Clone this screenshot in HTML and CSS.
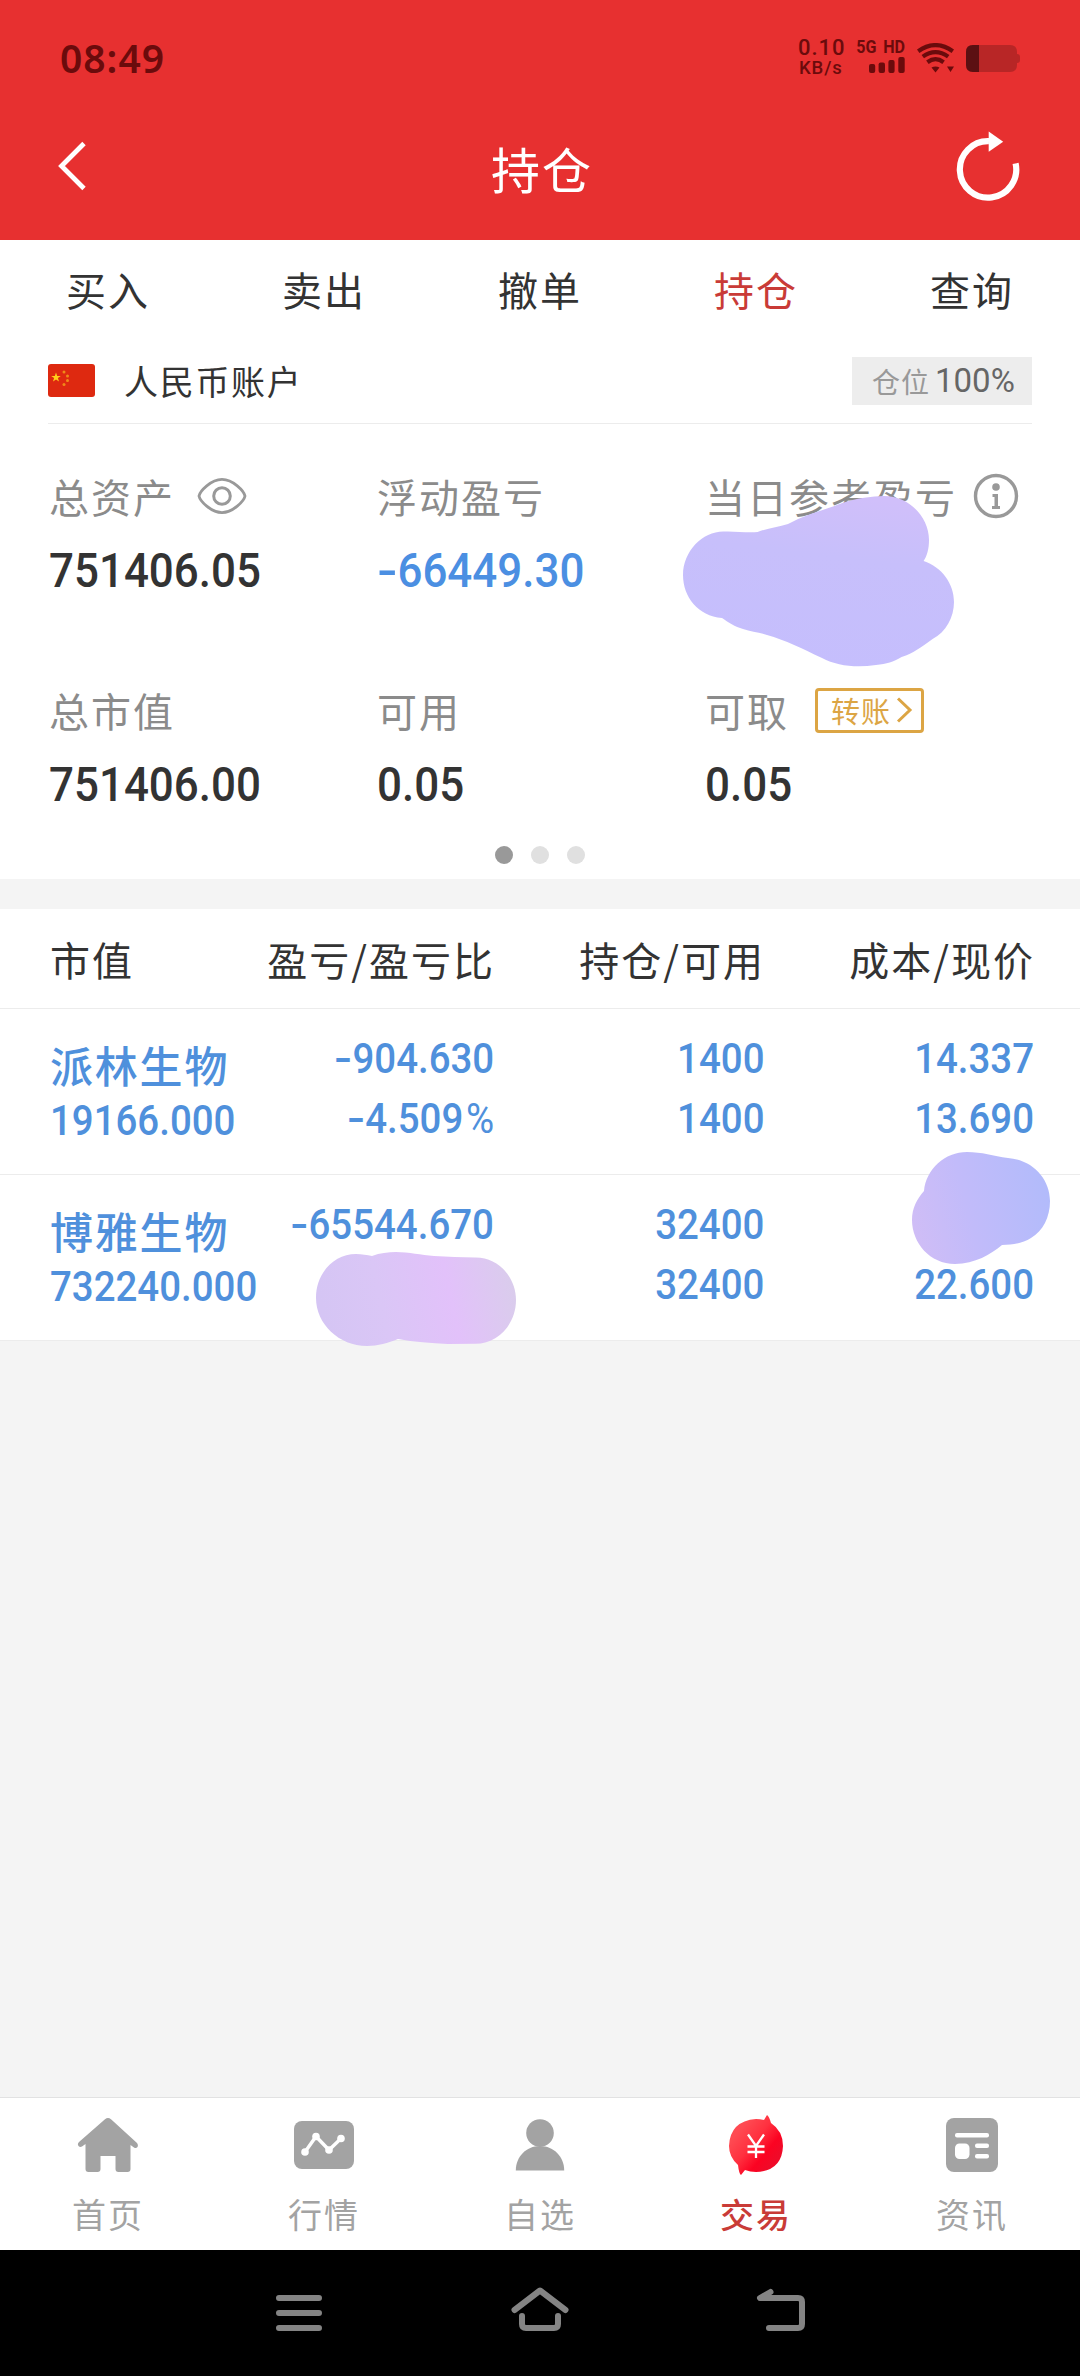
FILE: index.html
```html
<!DOCTYPE html>
<html lang="zh-CN">
<head>
<meta charset="utf-8">
<title>持仓</title>
<link rel="stylesheet" href="styles.css">
</head>
<body>
<div class="screen">
  <header class="top">
    <div class="status">
      <span class="clock">08:49</span>
      <div class="status-right">
        <div class="speed"><span class="speed-num">0.10</span><span class="speed-unit">KB/s</span></div>
        <div class="signal">
          <span class="net">5G HD</span>
          <svg width="36" height="16" viewBox="0 0 36 16" fill="#6b0b0c"><rect x="0" y="7" width="6.2" height="9" rx="2"/><rect x="9.6" y="5.5" width="6.4" height="10.5" rx="2"/><rect x="19.4" y="3" width="6.2" height="13" rx="2"/><rect x="29.3" y="0" width="6.4" height="16" rx="2"/></svg>
        </div>
        <svg class="wifi" width="38" height="30" viewBox="0 0 38 30" fill="none" stroke="#6b0b0c" stroke-width="4.2"><path d="M1.2 8.2Q18.5-4 35.8 8.2"/><path d="M5.8 13.6Q18.5 4.6 31.2 13.6"/><path d="M10.4 19.2Q18.5 13.2 26.6 19.2"/><path d="M14.5 24.6Q18.5 22.4 22.5 24.6L18.5 29.5ZM30 23.5h7L33.5 29Z" fill="#6b0b0c" stroke="none"/></svg>
        <svg class="battery" width="54" height="27" viewBox="0 0 54 27"><path d="M7 0H44Q51 0 51 7V9Q54 9 54 12V15Q54 18 51 18V20Q51 27 44 27H7Q0 27 0 20V7Q0 0 7 0Z" fill="#b82626"/><path d="M13 0H7Q0 0 0 7V20Q0 27 7 27H13Z" fill="#5c1012"/></svg>
      </div>
    </div>
    <div class="titlebar">
      <svg width="30" height="54" viewBox="57 139 30 54"><path d="M84 143.5L61.5 166L84 188.5" fill="none" stroke="#fff" stroke-width="4.8"/></svg>
      <h1>持仓</h1>
      <svg width="66" height="74" viewBox="955 129 66 74"><path d="M989 141.2A28.2 28.2 0 1 0 1015.6 163.4" fill="none" stroke="#fff" stroke-width="6.2"/><path d="M988.7 131.5L1003.2 141.7L988.7 151.8Z" fill="#fff"/></svg>
    </div>
  </header>

  <nav class="tabs"><a>买入</a><a>卖出</a><a>撤单</a><a class="active">持仓</a><a>查询</a></nav>

  <section class="summary">
    <div class="account">
      <svg width="47" height="33" viewBox="0 0 47 33"><rect width="47" height="33" rx="3" fill="#de2910"/><path d="M8 8.5L9.2 12H12.8L9.9 14.1L11 17.6L8 15.5L5 17.6L6.1 14.1L3.2 12H6.8Z" fill="#ffcf1a"/><g fill="#f08a18"><circle cx="16" cy="8" r="1.5"/><circle cx="19.5" cy="12" r="1.5"/><circle cx="19.5" cy="16.5" r="1.5"/><circle cx="16" cy="20.5" r="1.5"/></g></svg>
      <span class="account-name">人民币账户</span>
      <span class="ratio"><span>仓位</span><b>100%</b></span>
    </div>
    <div class="metrics">
      <div class="metric">
        <div class="label">总资产<svg class="eye" width="50" height="38" viewBox="0 0 50 38" fill="none" stroke="#999" stroke-width="2.8"><path d="M2 19C3 14 14 2.400 25 2.400S47 14 48 19C47 24 36 35.600 25 35.600S3 24 2 19Z"/><circle cx="25" cy="19" r="8.300" stroke-width="3"/></svg></div>
        <div class="value"><span class="num">751406.05</span></div>
      </div>
      <div class="metric">
        <div class="label">浮动盈亏</div>
        <div class="value down"><span class="num"><i>-</i>66449.30</span></div>
      </div>
      <div class="metric">
        <div class="label">当日参考盈亏<svg class="info" width="46" height="46" viewBox="0 0 46 46"><circle cx="23" cy="23" r="20.500" fill="none" stroke="#999" stroke-width="3.400"/><circle cx="23" cy="14" r="3.800" fill="#999"/><path d="M19.500 21H25V33H27V36H19V33H21.500V24H19.500Z" fill="#999"/></svg></div>
        <div class="value"></div>
      </div>
      <div class="metric">
        <div class="label">总市值</div>
        <div class="value"><span class="num">751406.00</span></div>
      </div>
      <div class="metric">
        <div class="label">可用</div>
        <div class="value"><span class="num">0.05</span></div>
      </div>
      <div class="metric">
        <div class="label">可取<a class="transfer">转账<svg width="17" height="26" viewBox="0 0 17 26"><path d="M2 1.500L14 13L2 24.500" fill="none" stroke="#dca544" stroke-width="3"/></svg></a></div>
        <div class="value"><span class="num">0.05</span></div>
      </div>
    </div>
    <div class="dots"><span class="on"></span><span></span><span></span></div>
    <svg class="blob blob-a" width="272" height="172" viewBox="683 496 272 172">
      <defs><linearGradient id="ga" x1=".6" y1="0" x2=".4" y2="1"><stop offset="0" stop-color="#d0bffa"/><stop offset=".35" stop-color="#c7bffb"/><stop offset="1" stop-color="#c5befd"/></linearGradient></defs>
      <path fill="url(#ga)" d="M683 575C683 551 703 531 724 531.500C735 531 747 533 757.600 532C768 528 778 527 788 524C803 516 817 512 833 506.500C845 502 857 497 884 496C909 496 929 517 929 540C929 549 927 556 923.600 561C942 567 954 584 954 602C954 617 946 632 932.600 639C921 647 914 653 901.600 657C893 662 887 664 876 665C856 668 837 666 822 658C803 649 785 640 767 635C759 632 751 632 743 629C735 627 728 622 722 618C698 616 683 597 683 575Z"/>
    </svg>
  </section>

  <section class="holdings">
    <div class="row head"><span>市值</span><span>盈亏/盈亏比</span><span>持仓/可用</span><span>成本/现价</span></div>
    <div class="row stock">
      <div class="cell name"><strong>派林生物</strong><span class="num">19166.000</span></div>
      <div class="cell"><span class="num"><i>-</i>904.630</span><span class="num"><i>-</i>4.509<em>%</em></span></div>
      <div class="cell"><span class="num">1400</span><span class="num">1400</span></div>
      <div class="cell"><span class="num">14.337</span><span class="num">13.690</span></div>
    </div>
    <div class="row stock">
      <div class="cell name"><strong>博雅生物</strong><span class="num">732240.000</span></div>
      <div class="cell"><span class="num"><i>-</i>65544.670</span></div>
      <div class="cell"><span class="num">32400</span><span class="num">32400</span></div>
      <div class="cell end"><span class="num">22.600</span></div>
    </div>
    <svg class="blob blob-b" width="202" height="96" viewBox="315 1251 202 96">
      <defs><linearGradient id="gb" x1="0" y1=".3" x2="1" y2=".2"><stop offset="0" stop-color="#d5c5f4"/><stop offset=".3" stop-color="#dac6f6"/><stop offset=".65" stop-color="#e2c1fa"/><stop offset="1" stop-color="#d9cdeb"/></linearGradient></defs>
      <path fill="url(#gb)" d="M316 1298C316 1273 334 1254 356 1254C362 1254 367 1255 372 1256C380 1253 388 1252 396 1252C409 1252 421 1255 434 1256C448 1257 461 1257 475 1257.500C498 1257 516 1277 516 1300C516 1324 498 1344 475 1343.700L448 1344C431 1343 414 1342 398 1339C388 1343 378 1346 367 1346C339 1346 316 1324 316 1298Z"/>
    </svg>
    <svg class="blob blob-c" width="140" height="114" viewBox="911 1151 140 114">
      <defs><linearGradient id="gc" x1="0" y1=".6" x2="1" y2=".4"><stop offset="0" stop-color="#cfbdf6"/><stop offset=".4" stop-color="#c2bbfa"/><stop offset="1" stop-color="#b2bbfb"/></linearGradient></defs>
      <path fill="url(#gc)" d="M912 1220C912 1208 917 1199 924 1191C926 1169 945 1152 967 1152C982 1152 993 1156 1008 1158C1033 1160 1050 1179 1050 1201C1050 1217 1043 1231 1031 1238C1023 1243 1013 1245 1002 1245C991 1254 975 1264 955 1264C930 1264 912 1243 912 1220Z"/>
    </svg>
  </section>

  <footer class="tabbar">
    <a><svg width="62" height="56" viewBox="77 2117 62 56" fill="#a3a3a3"><path d="M105 2119.200Q108 2116.800 111 2119.200L137 2143Q138.500 2145 137.500 2147Q136 2148.800 134 2147.500L130.500 2145V2169Q130.500 2172 127.500 2172H118.500Q115.500 2172 115.500 2169V2156H100.500V2169Q100.500 2172 97.500 2172H88.500Q85.500 2172 85.500 2169V2144L82 2146.500Q80 2147.500 78.500 2146Q77 2144 79 2142Z"/></svg>首页</a>
    <a><svg width="62" height="56" viewBox="293 2117 62 56"><rect x="294" y="2121" width="60" height="48" rx="8" fill="#a3a3a3"/><path d="M305 2152L316 2136.500L329 2150L341 2138.500" fill="none" stroke="#fff" stroke-width="3.400"/><g fill="#fff"><circle cx="305" cy="2152" r="3.800"/><circle cx="316" cy="2136.500" r="3.800"/><circle cx="329" cy="2150" r="3.800"/><circle cx="341" cy="2138.500" r="3.800"/></g></svg>行情</a>
    <a><svg width="62" height="56" viewBox="509 2117 62 56" fill="#a3a3a3"><circle cx="540" cy="2133" r="13.800"/><path d="M515.800 2170.500C515.800 2157 526 2146 540 2146S564.200 2157 564.200 2170.500Z"/></svg>自选</a>
    <a class="active"><svg width="62" height="62" viewBox="725 2114 62 62"><defs><linearGradient id="gt" x1=".2" y1=".25" x2=".8" y2=".8"><stop offset="0" stop-color="#ff4a52"/><stop offset=".4" stop-color="#ff303f"/><stop offset=".75" stop-color="#fb0322"/><stop offset="1" stop-color="#f00a28"/></linearGradient></defs><path fill="url(#gt)" d="M764 2120L767 2115Q769 2116 771 2123Q783 2131 783 2146Q782 2171 756 2172Q750 2172 745 2170L741 2175Q739 2174 738 2165Q729 2157 729 2146Q730 2121 756 2119Q760 2119 764 2120Z"/><path d="M748 2134.500L756 2146L764 2134.500M756 2146V2158M747.500 2146.500H764.500M747.500 2152H764.500" fill="none" stroke="#fff" stroke-width="2.300"/></svg>交易</a>
    <a><svg width="62" height="56" viewBox="941 2117 62 56"><rect x="946" y="2118" width="52" height="54" rx="8" fill="#a3a3a3"/><g fill="#fff"><rect x="955" y="2133" width="34" height="4.500" rx="2"/><rect x="955" y="2143.500" width="14.500" height="15.500" rx="4.500"/><rect x="975" y="2143.500" width="14" height="4.500" rx="2"/><rect x="975" y="2154" width="14" height="4.500" rx="2"/></g></svg>资讯</a>
  </footer>

  <div class="sysnav">
    <svg width="60" height="50" viewBox="270 2285 60 50" stroke="#848484" stroke-width="6" stroke-linecap="round"><path d="M280 2298H320M280 2313H320M280 2328H320"/></svg>
    <svg width="64" height="50" viewBox="508 2285 64 50" fill="none" stroke="#848484" stroke-width="6" stroke-linecap="round" stroke-linejoin="round"><path d="M514.500 2310L540 2290.500L565.500 2310M522 2316V2324Q522 2328 526 2328H554Q558 2328 558 2324V2316"/></svg>
    <svg width="60" height="50" viewBox="750 2285 60 50" fill="none" stroke="#848484" stroke-width="6" stroke-linecap="round" stroke-linejoin="round"><path d="M769.500 2292L759 2298H797Q801 2298 801 2302V2324Q801 2328 797 2328H768"/></svg>
  </div>
</div>
</body>
</html>
```
FILE: styles.css
```css
* { box-sizing: border-box; }
body { margin: 0; font-family: "Noto Sans CJK SC", sans-serif; color: #333; }
svg { display: block; flex: none; }
.screen { width: 1080px; height: 2376px; display: flex; flex-direction: column; background: #f4f4f4; overflow: hidden; }

.top { height: 240px; background: #e73030; flex: none; }
.status { height: 116px; padding: 0 60px; display: flex; align-items: center; justify-content: space-between; color: #6b0b0c; font-family: "Noto Sans", sans-serif; }
.clock { font-size: 39px; font-weight: 600; letter-spacing: 1px; line-height: 116px; }
.status-right { display: flex; align-items: flex-start; height: 36px; }
.speed { width: 46px; margin: -1px 13px 0 0; display: flex; flex-direction: column; font: 500 22px/18px Roboto, sans-serif; white-space: nowrap; }
.speed-num { line-height: 18px; letter-spacing: 1px; }
.speed-unit { font-size: 18.500px; line-height: 18px; padding: 2px 0 0 1px; letter-spacing: .9px; }
.signal { width: 48px; display: flex; flex-direction: column; align-items: flex-end; gap: 3px; margin-right: 12px; }
.net { font: 700 17.500px/14px Roboto, sans-serif; white-space: nowrap; word-spacing: 3px; transform: scaleX(.92); transform-origin: right center; }
.wifi { margin: 3px 11px 0 0; }
.battery { margin-top: 5px; }
.titlebar { height: 100px; padding: 0 59px 0 57px; display: flex; align-items: center; justify-content: space-between; }
.titlebar h1 { margin: 0 0 0 42px; color: #fff; font-size: 49px; font-weight: 400; letter-spacing: 2px; line-height: 100px; padding-top: 3px; }

.tabs { height: 102px; flex: none; display: flex; background: #fff; }
.tabs a { flex: 1; text-align: center; font-size: 40px; letter-spacing: 2px; line-height: 99px; }
.tabs .active { color: #c93b37; }

.summary { position: relative; height: 537px; flex: none; padding: 0 48px; background: #fff; }
.account { height: 82px; display: flex; align-items: center; border-bottom: 1px solid #ececec; padding-bottom: 4px; }
.account-name { margin-left: 29px; flex: 1; font-size: 34px; letter-spacing: 1.700px; }
.ratio { width: 180px; height: 48px; padding-left: 20px; display: flex; align-items: center; background: #ededed; color: #999; font-size: 28px; letter-spacing: 1px; white-space: nowrap; }
.ratio b { margin-left: 5px; font: 400 33px/50px Roboto, sans-serif; letter-spacing: 0; color: #666; }
.metrics { display: grid; grid-template-columns: repeat(3, 328px); grid-template-rows: 214px 168px; padding-top: 40px; }
.label { height: 64px; display: flex; align-items: center; padding-left: 1px; font-size: 40px; letter-spacing: 2px; line-height: 60px; color: #8b8b8b; white-space: nowrap; }
.eye { margin-left: 22px; }
.info { margin-left: 16px; }
.value { height: 84px; padding-left: 1px; font: 500 48px/86px Roboto, sans-serif; }
.down { color: #4b8fe2; }
.num { display: inline-block; transform: scaleX(.915); transform-origin: left center; white-space: nowrap; }
.num i { display: inline-block; font-style: normal; transform: scaleX(1.35); margin: 0 3px; }
.transfer { width: 109px; height: 45px; margin-left: 26px; display: flex; align-items: center; padding-left: 13px; border: 3px solid #dca544; border-radius: 4px; color: #dca544; font-size: 29px; letter-spacing: 1px; line-height: 38px; }
.transfer svg { margin-left: 5px; }
.dots { display: flex; justify-content: center; gap: 18px; }
.dots span { width: 18px; height: 18px; border-radius: 50%; background: #e0e0e0; }
.dots .on { background: #999; }

.holdings { position: relative; margin-top: 30px; height: 432px; flex: none; background: #fff; }
.row { display: grid; grid-template-columns: 174px 270px 270px 270px; padding-left: 50px; border-bottom: 1px solid #ececec; }
.head { height: 100px; font-size: 40px; letter-spacing: 2px; line-height: 100px; text-align: right; white-space: nowrap; }
.head span { margin-right: -1px; }
.head span:first-child { text-align: left; }
.stock { height: 166px; color: #4f90dc; font: 500 42px/60px Roboto, sans-serif; }
.cell { padding-top: 20px; display: flex; flex-direction: column; align-items: flex-end; }
.cell .num { transform: scaleX(.915); transform-origin: right center; }
.cell .num i { margin: 0 3px 0 4px; }
.cell em { font-style: normal; font-weight: 400; margin-left: 3px; }
.end { padding-top: 80px; }
.name { padding-top: 29px; align-items: flex-start; }
.name strong { font: 500 43px/53px "Noto Sans CJK SC", sans-serif; letter-spacing: 1.800px; white-space: nowrap; }
.name .num { transform-origin: left center; }

.blob { position: absolute; }
.blob-a { left: 683px; top: 154px; }
.blob-b { left: 315px; top: 342px; }
.blob-c { left: 911px; top: 242px; }

.tabbar { margin-top: auto; height: 153px; flex: none; display: flex; background: #fff; border-top: 1px solid #e2e2e2; }
.tabbar a { flex: 1; display: flex; flex-direction: column; align-items: center; padding-top: 19px; color: #a3a3a3; font-size: 34px; letter-spacing: 2px; line-height: 50px; gap: 16px; }
.tabbar .active { color: #c93b37; font-weight: 500; padding-top: 16px; gap: 13px; }
.sysnav { height: 126px; flex: none; padding: 0 180px; background: #000; display: flex; align-items: center; justify-content: space-around; padding-bottom: 6px; }
```
